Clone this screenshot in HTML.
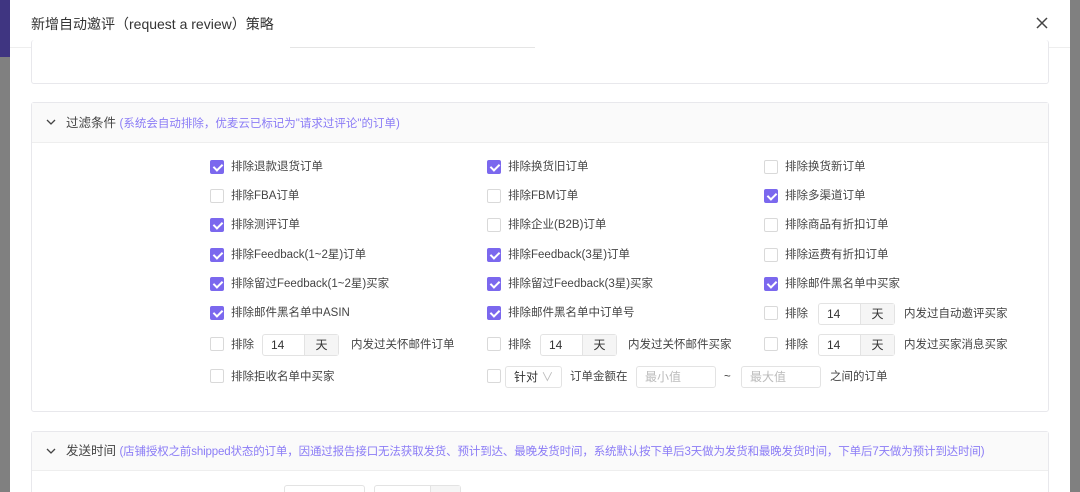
<!DOCTYPE html>
<html style="width:1080px;height:492px;overflow:hidden"><head><meta charset="utf-8"><style>
*{box-sizing:border-box;margin:0;padding:0}
body{width:1080px;height:492px;overflow:hidden;position:relative;background:#808080;font-family:"Liberation Sans","Noto Sans CJK SC",sans-serif;font-size:12px;color:#333}
.a{position:absolute}
.modal{left:10px;top:0;width:1060px;height:492px;background:#fff}
.panel{border:1px solid #e8e8ec;border-radius:3px;background:#fff}
.cb{width:14px;height:14px;border:1px solid #d9d9d9;border-radius:2px;background:#fff}
.cb.on{background:#7b68ee;border-color:#7b68ee}
.cb.on:after{content:"";position:absolute;left:4px;top:1px;width:4px;height:7px;border:solid #fff;border-width:0 2px 2px 0;transform:rotate(45deg)}
.t{font-size:11.5px;color:#444;white-space:nowrap;line-height:14px}
.inp{height:22px;border:1px solid #e3e3e3;border-radius:3px;background:#fff;font-size:12px;line-height:20px;padding-left:8px}
.add{position:absolute;right:0;top:0;width:34px;height:20px;background:#f5f5f5;border-left:1px solid #e3e3e3;text-align:center;padding:0}
.ph{color:#bbb}
</style></head><body>
<div class="a" style="left:0;top:0;width:10px;height:57px;background:#3f3581"></div>
<div class="a modal"></div>
<div class="a t" style="left:31px;top:16px;font-size:14px;line-height:16px;color:#333">新增自动邀评（request a review）策略</div>
<svg class="a" style="left:1036px;top:17px" width="12" height="12"><path d="M1 1L11 11M11 1L1 11" stroke="#444" stroke-width="1.5"/></svg>
<div class="a" style="left:10px;top:47px;width:1060px;height:1px;background:#eee"></div>
<div class="a panel" style="left:31px;top:40px;width:1018px;height:44px;border-top:none"></div>
<div class="a" style="left:290px;top:47px;width:245px;height:1px;background:#e5e5e5"></div>

<div class="a panel" style="left:31px;top:102px;width:1018px;height:310px"></div>
<div class="a" style="left:32px;top:103px;width:1016px;height:40px;background:#fafafa;border-bottom:1px solid #eee"></div>
<svg class="a" style="left:46px;top:119px" width="10" height="7"><path d="M1 1L5 5L9 1" stroke="#444" stroke-width="1.3" fill="none"/></svg>
<div class="a t" style="left:66px;top:116px;font-size:12.5px">过滤条件 <span style="color:#8b7cf6;font-size:11.5px">(系统会自动排除，优麦云已标记为"请求过评论"的订单)</span></div>

<div class="a panel" style="left:31px;top:431px;width:1018px;height:70px"></div>
<div class="a" style="left:32px;top:432px;width:1016px;height:39px;background:#fafafa;border-bottom:1px solid #eee"></div>
<svg class="a" style="left:46px;top:448px" width="10" height="7"><path d="M1 1L5 5L9 1" stroke="#444" stroke-width="1.3" fill="none"/></svg>
<div class="a t" style="left:66px;top:444px;font-size:12.5px">发送时间 <span style="color:#8b7cf6;font-size:11.5px;letter-spacing:-0.15px">(店铺授权之前shipped状态的订单，因通过报告接口无法获取发货、预计到达、最晚发货时间，系统默认按下单后3天做为发货和最晚发货时间，下单后7天做为预计到达时间)</span></div>
<div class="a inp" style="left:284px;top:485px;width:81px;height:22px"></div>
<div class="a inp" style="left:374px;top:485px;width:87px;height:22px"><div class="add" style="width:30px"></div></div>

<div class="a cb on" style="left:210px;top:160px"></div><div class="a t" style="left:231px;top:160px">排除退款退货订单</div>
<div class="a cb on" style="left:487px;top:160px"></div><div class="a t" style="left:508px;top:160px">排除换货旧订单</div>
<div class="a cb" style="left:764px;top:160px"></div><div class="a t" style="left:785px;top:160px">排除换货新订单</div>

<div class="a cb" style="left:210px;top:189px"></div><div class="a t" style="left:231px;top:189px">排除FBA订单</div>
<div class="a cb" style="left:487px;top:189px"></div><div class="a t" style="left:508px;top:189px">排除FBM订单</div>
<div class="a cb on" style="left:764px;top:189px"></div><div class="a t" style="left:785px;top:189px">排除多渠道订单</div>

<div class="a cb on" style="left:210px;top:218px"></div><div class="a t" style="left:231px;top:218px">排除测评订单</div>
<div class="a cb" style="left:487px;top:218px"></div><div class="a t" style="left:508px;top:218px">排除企业(B2B)订单</div>
<div class="a cb" style="left:764px;top:218px"></div><div class="a t" style="left:785px;top:218px">排除商品有折扣订单</div>

<div class="a cb on" style="left:210px;top:248px"></div><div class="a t" style="left:231px;top:248px">排除Feedback(1~2星)订单</div>
<div class="a cb on" style="left:487px;top:248px"></div><div class="a t" style="left:508px;top:248px">排除Feedback(3星)订单</div>
<div class="a cb" style="left:764px;top:248px"></div><div class="a t" style="left:785px;top:248px">排除运费有折扣订单</div>

<div class="a cb on" style="left:210px;top:277px"></div><div class="a t" style="left:231px;top:277px">排除留过Feedback(1~2星)买家</div>
<div class="a cb on" style="left:487px;top:277px"></div><div class="a t" style="left:508px;top:277px">排除留过Feedback(3星)买家</div>
<div class="a cb on" style="left:764px;top:277px"></div><div class="a t" style="left:785px;top:277px">排除邮件黑名单中买家</div>

<div class="a cb on" style="left:210px;top:306px"></div><div class="a t" style="left:231px;top:306px">排除邮件黑名单中ASIN</div>
<div class="a cb on" style="left:487px;top:306px"></div><div class="a t" style="left:508px;top:306px">排除邮件黑名单中订单号</div>
<div class="a cb" style="left:764px;top:306px"></div><div class="a t" style="left:785px;top:307px">排除</div>
<div class="a inp" style="left:818px;top:303px;width:77px">14<div class="add">天</div></div>
<div class="a t" style="left:904px;top:307px">内发过自动邀评买家</div>

<div class="a cb" style="left:210px;top:337px"></div><div class="a t" style="left:231px;top:338px">排除</div>
<div class="a inp" style="left:262px;top:334px;width:77px">14<div class="add">天</div></div>
<div class="a t" style="left:351px;top:338px">内发过关怀邮件订单</div>
<div class="a cb" style="left:487px;top:337px"></div><div class="a t" style="left:508px;top:338px">排除</div>
<div class="a inp" style="left:540px;top:334px;width:77px">14<div class="add">天</div></div>
<div class="a t" style="left:628px;top:338px">内发过关怀邮件买家</div>
<div class="a cb" style="left:764px;top:337px"></div><div class="a t" style="left:785px;top:338px">排除</div>
<div class="a inp" style="left:818px;top:334px;width:77px">14<div class="add">天</div></div>
<div class="a t" style="left:904px;top:338px">内发过买家消息买家</div>

<div class="a cb" style="left:210px;top:369px"></div><div class="a t" style="left:231px;top:370px">排除拒收名单中买家</div>
<div class="a cb" style="left:487px;top:369px"></div>
<div class="a inp" style="left:505px;top:366px;width:57px">针对 <span style="color:#bbb">∨</span></div>
<div class="a t" style="left:570px;top:370px">订单金额在</div>
<div class="a inp ph" style="left:636px;top:366px;width:80px">最小值</div>
<div class="a t" style="left:724px;top:370px">~</div>
<div class="a inp ph" style="left:741px;top:366px;width:80px">最大值</div>
<div class="a t" style="left:830px;top:370px">之间的订单</div>
</body></html>
